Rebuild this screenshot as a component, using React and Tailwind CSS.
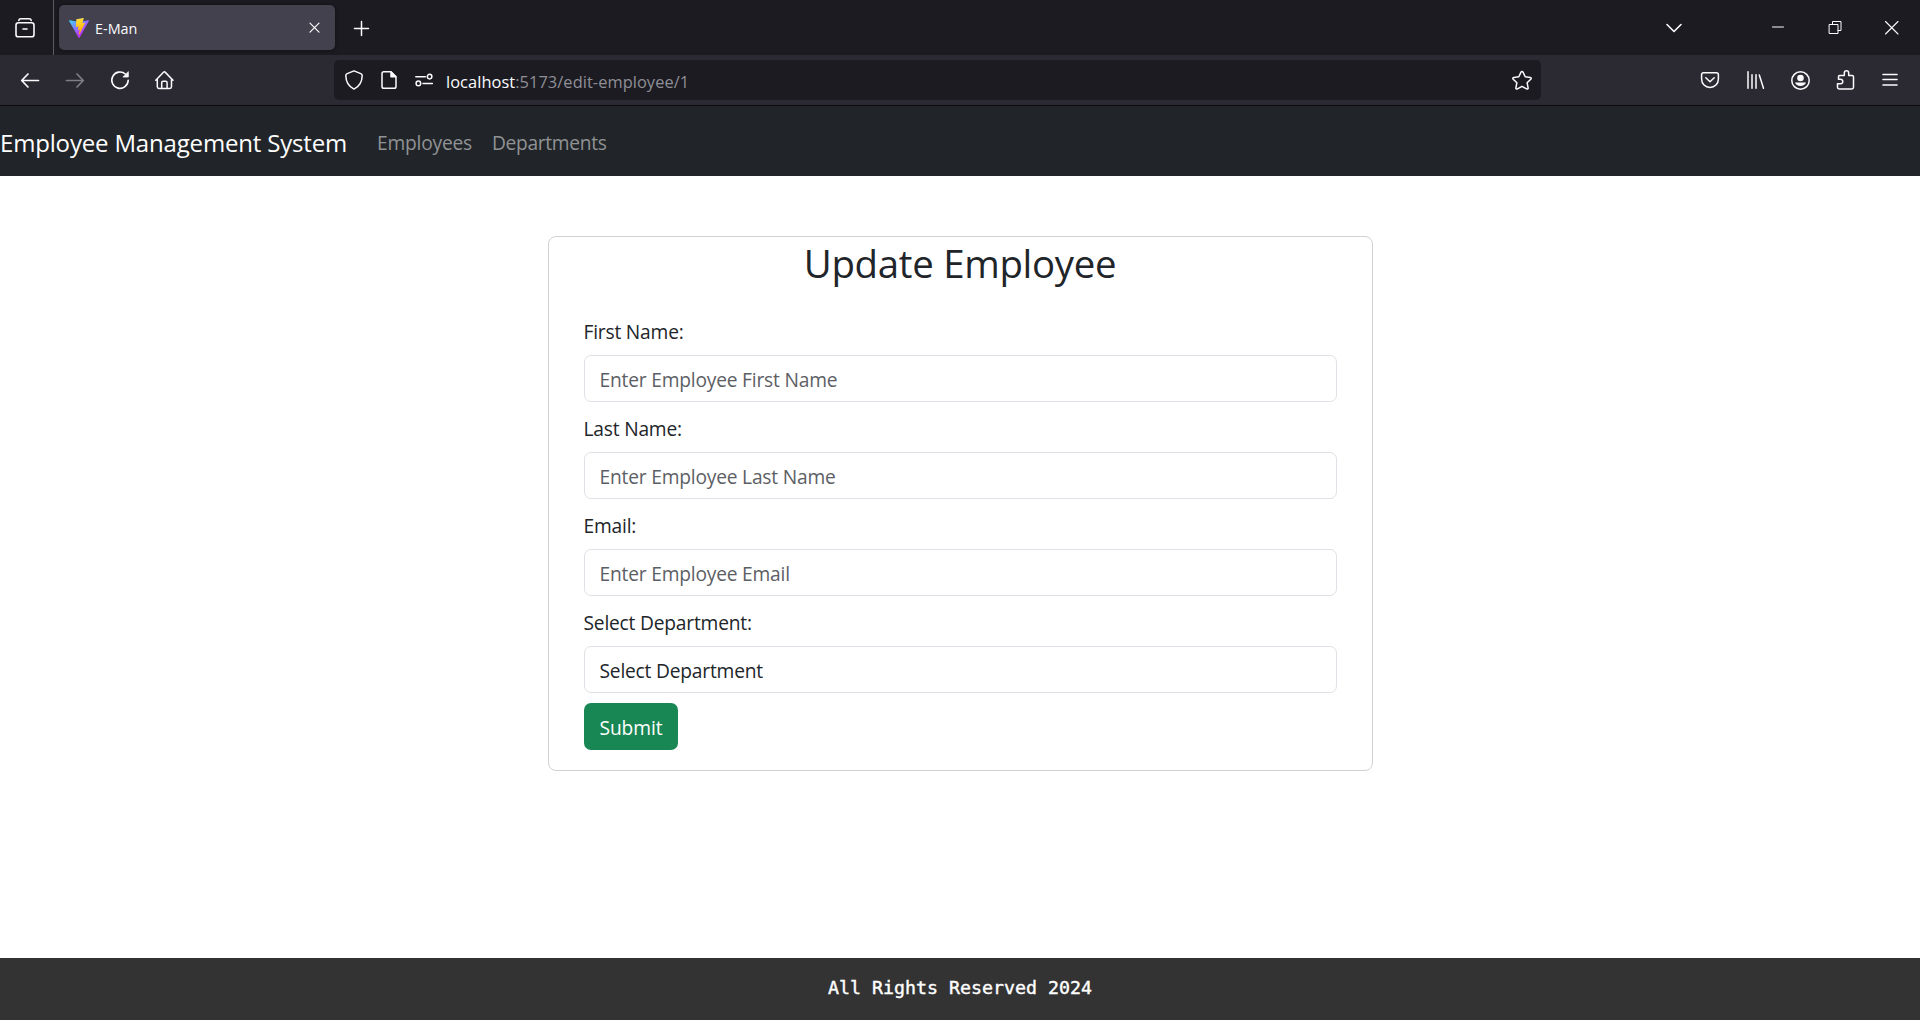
function Icon({ children, className = "", stroke = 1.5 }) {
  return (
    <svg
      viewBox="0 0 20 20"
      className={"h-5 w-5 shrink-0 " + className}
      fill="none"
      stroke="#fbfbfe"
      strokeWidth={stroke}
      strokeLinecap="round"
      strokeLinejoin="round"
      aria-hidden="true"
    >
      {children}
    </svg>
  );
}

function ViteLogo() {
  return (
    <svg viewBox="0 0 256 257" className="mt-px ml-[10px] h-5 w-5 shrink-0" aria-hidden="true">
      <defs>
        <linearGradient id="viteBody" x1="-.828%" x2="57.636%" y1="7.652%" y2="78.411%">
          <stop offset="0%" stopColor="#41D1FF" />
          <stop offset="100%" stopColor="#BD34FE" />
        </linearGradient>
        <linearGradient id="viteBolt" x1="43.376%" x2="50.316%" y1="2.242%" y2="89.03%">
          <stop offset="0%" stopColor="#FFEA83" />
          <stop offset="8.333%" stopColor="#FFDD35" />
          <stop offset="100%" stopColor="#FFA800" />
        </linearGradient>
      </defs>
      <path
        fill="url(#viteBody)"
        d="M255.153 37.938L134.897 252.976c-2.483 4.44-8.862 4.466-11.382.048L.875 37.958c-2.746-4.814 1.371-10.646 6.827-9.67l120.385 21.517a6.537 6.537 0 0 0 2.322-.004l117.867-21.483c5.438-.991 9.574 4.796 6.877 9.62Z"
      />
      <path
        fill="url(#viteBolt)"
        d="M185.432.063L96.44 17.501a3.268 3.268 0 0 0-2.634 3.014l-5.474 92.456a3.268 3.268 0 0 0 3.997 3.378l24.777-5.718c2.318-.535 4.413 1.507 3.936 3.838l-7.361 36.047c-.495 2.426 1.782 4.5 4.151 3.78l15.304-4.649c2.372-.72 4.652 1.36 4.15 3.788l-11.698 56.621c-.732 3.542 3.979 5.473 5.943 2.437l1.313-2.028l72.516-144.72c1.215-2.423-.88-5.186-3.54-4.672l-25.505 4.922c-2.396.462-4.435-1.77-3.759-4.114l16.646-57.705c.677-2.35-1.37-4.583-3.769-4.113Z"
      />
    </svg>
  );
}

function TabStrip() {
  return (
    <div className="flex h-[55px] items-center bg-[#1c1b22]">
      <Icon className="mt-px ml-[15px]" stroke={1.6}>
        <path d="M3.8 2.4C4 1.2 4.7.8 5.800.8h8.400c1.100 0 1.800.4 2 1.600" />
        <rect x="1" y="4.800" width="18" height="14" rx="2.400" />
        <path d="M8 11h4" />
      </Icon>
      <div className="ml-[18px] h-full w-px bg-[#5b5b66]" />
      <div className="ml-[5px] flex h-[45px] w-[276px] items-center rounded-[5px] bg-[#42414d] shadow-[0_0_4px_rgba(0,0,0,0.5)]">
        <ViteLogo />
        <span className="ml-[6px] pt-[2px] text-[14.4px] leading-5 text-[#fbfbfe]">E-Man</span>
        <Icon className="mr-[10px] ml-auto" stroke={1.2}>
          <path d="M5 5.200l9 9M14 5.200l-9 9" />
        </Icon>
      </div>
      <Icon className="mt-[3px] ml-[16px]" stroke={1.5}>
        <path d="M10.500 2.500v14M3.500 9.500h14" />
      </Icon>
      <Icon className="ml-auto" stroke={1.6}>
        <path d="M3 6.500l7 7 7-7" />
      </Icon>
      <Icon className="ml-[84px]" stroke={1}>
        <path d="M4.500 9h11" />
      </Icon>
      <Icon className="mt-px ml-[37px]" stroke={1}>
        <path d="M4.500 6.500h8.500v9h-8.500zM7.500 6.500v-3h8.500v9h-3" strokeLinejoin="miter" />
      </Icon>
      <Icon className="mt-px mr-[18px] ml-[37px]" stroke={1.1}>
        <path d="M3.500 3.500l12.500 12.500M16 3.500L3.500 16" />
      </Icon>
    </div>
  );
}

function AddressBar() {
  return (
    <div className="ml-[159px] flex h-10 w-[1207px] items-center rounded-[5px] bg-[#1c1b22]">
      <Icon className="ml-[10px]">
        <path d="M10 .9l6.800 2.700c.9.4 1.400 1 1.400 2-.1 6.200-2.700 11-8.200 13.500C4.500 16.600 1.900 11.800 1.800 5.600c0-1 .5-1.600 1.400-2z" />
      </Icon>
      <Icon className="ml-[15px]">
        <path d="M4.800 1.800h7.200l5 5v9.600c0 1.100-.7 1.800-1.800 1.800H4.800c-1.100 0-1.800-.7-1.800-1.800V3.600c0-1.100.7-1.800 1.800-1.800z" />
        <path d="M12 2v4.800h4.800z" fill="#fbfbfe" />
      </Icon>
      <Icon className="ml-[15px]">
        <path d="M1.800 6.800h9.500M9 13.400h9.400" />
        <circle cx="15.600" cy="6.600" r="2.300" />
        <circle cx="4.400" cy="13.400" r="2.300" />
      </Icon>
      <div className="ml-3 pt-[3px] text-[16.4px] leading-6 tracking-[0.06px] text-[#8f8f96]">
        <span className="text-[#fbfbfe]">localhost</span>:5173/edit-employee/1
      </div>
      <Icon className="mr-[9px] ml-auto">
        <path d="M10 1.400c.5 0 .8.3 1 .7l2.200 4.700 5 .6c1 .1 1.300 1.200.6 1.800l-3.700 3.500 1 5.100c.2 1-.7 1.600-1.500 1.100L10 16.400l-4.600 2.500c-.8.5-1.700-.1-1.500-1.100l1-5.100L1.200 9.200c-.7-.6-.4-1.700.6-1.800l5-.6L9 2.100c.2-.4.5-.7 1-.7z" />
      </Icon>
    </div>
  );
}

function Toolbar() {
  return (
    <div className="flex h-[50px] items-center bg-[#2b2a33]">
      <Icon className="ml-5" stroke={1.7}>
        <path d="M18.500 10.500H2M8 4L1.700 10.500 8 17" />
      </Icon>
      <Icon className="ml-[25px] opacity-40" stroke={1.7}>
        <path d="M1.500 10.500H18M12 4l6.300 6.500L12 17" />
      </Icon>
      <Icon className="ml-[25px]" stroke={1.6}>
        <path d="M15.400 4A8.200 8.200 0 1 0 18.200 10.300" />
        <path d="M18.300 2v5h-5z" fill="#fbfbfe" strokeWidth="0.8" />
      </Icon>
      <Icon className="ml-[25px]">
        <path d="M.8 10.200L8.700 2.100q.7-.7 1.400 0L18 10.200M2.300 8.800v8c0 1 .6 1.700 1.700 1.700h10.800c1.100 0 1.700-.7 1.700-1.700v-8" />
        <path d="M6.700 18.300v-5.600c0-.9.5-1.400 1.400-1.400h2.600c.9 0 1.400.5 1.400 1.400v5.600" />
      </Icon>
      <AddressBar />
      <Icon className="ml-auto">
        <path d="M3.600 2.800h12.800c1.200 0 2 .8 2 2V9c0 4.900-3.700 8.400-8.400 8.400S1.600 13.900 1.600 9V4.800c0-1.200.8-2 2-2z" />
        <path d="M5.800 7.800L10 11.800l4.200-4" />
      </Icon>
      <Icon className="ml-[26px]">
        <path d="M2 1.800v16.400M6 4.800v13.400M10 4.800v13.400M13.300 5l4.200 13.200" />
      </Icon>
      <Icon className="ml-[25px]">
        <circle cx="9.500" cy="10.500" r="8.700" />
        <circle cx="9.500" cy="8" r="3.300" fill="#fbfbfe" stroke="none" />
        <path d="M4 12.600h11c-.8 2.200-2.900 3.400-5.500 3.400S4.800 14.800 4 12.600z" fill="#fbfbfe" stroke="none" />
      </Icon>
      <Icon className="ml-[25px]">
        <path d="M3.200 19h12.600c1 0 1.700-.7 1.700-1.700V6.700c0-.7-.5-1.200-1.200-1.200h-3.600V3a2.200 2.200 0 0 0-4.400 0v2.500H3.700c-.7 0-1.200.5-1.200 1.200v2.500h2a2.300 2.300 0 0 1 0 4.600h-3v3.500c0 1 .7 1.700 1.700 1.700z" />
      </Icon>
      <Icon className="mr-5 ml-[24px]" stroke={1.6}>
        <path d="M3 4.500h14M3 9.500h14M3 15h14" />
      </Icon>
    </div>
  );
}

function SiteNav() {
  return (
    <nav className="flex h-[70px] items-center bg-[#212529] pt-[3px]">
      <span className="w-[377px] text-[24px] leading-9 tracking-[-0.17px] whitespace-nowrap text-white">
        Employee Management System
      </span>
      <span className="w-[115px] text-[19.2px] leading-[30px] tracking-[-0.2px] text-[#909294]">Employees</span>
      <span className="text-[19.2px] leading-[30px] tracking-[-0.32px] text-[#909294]">Departments</span>
    </nav>
  );
}

function Field({ label, children }) {
  return (
    <div className="mb-3 flex flex-col gap-2">
      <span className="text-[19.2px] leading-[30px] tracking-[-0.2px] text-[#212529]">{label}</span>
      {children}
    </div>
  );
}

const controlBase =
  "h-[47px] w-full appearance-none rounded-[7px] border border-[#dee2e6] bg-white px-[15px] text-[19.2px] tracking-[-0.2px] text-[#212529] outline-none placeholder:text-[#5c6065] placeholder:opacity-100";

function EmployeeForm() {
  return (
    <div className="mx-auto mt-[60px] w-[825px] rounded-[8px] border border-[#d0d1d2] bg-white">
      <h2 className="text-center text-[38.4px] leading-[52px] tracking-[-0.3px] text-[#212529]">Update Employee</h2>
      <form className="px-[35px] pt-7 pb-5">
        <Field label="First Name:">
          <input className={controlBase + " pt-[2px]"} placeholder="Enter Employee First Name" />
        </Field>
        <Field label="Last Name:">
          <input className={controlBase + " pt-[2px]"} placeholder="Enter Employee Last Name" />
        </Field>
        <Field label="Email:">
          <input className={controlBase + " pt-[2px]"} placeholder="Enter Employee Email" />
        </Field>
        <Field label="Select Department:">
          <select className={controlBase + " pt-[4px]"}>
            <option>Select Department</option>
          </select>
        </Field>
        <button
          type="button"
          className="-mt-[2px] block h-[47px] w-[94px] rounded-[7px] bg-[#198754] pt-[4px] pl-px text-[19.2px] tracking-[-0.05px] text-white"
        >
          Submit
        </button>
      </form>
    </div>
  );
}

export default function App() {
  return (
    <div className="flex h-[1020px] w-[1920px] flex-col overflow-hidden bg-white font-['Open_Sans','Noto_Sans',sans-serif]">
      <header>
        <TabStrip />
        <Toolbar />
        <div className="h-px bg-[#0c0c0d]" />
      </header>
      <SiteNav />
      <main className="flex-1">
        <EmployeeForm />
      </main>
      <footer className="flex h-[62px] items-center justify-center bg-[#333333] pb-[3px] font-['DejaVu_Sans_Mono','Liberation_Mono',monospace] text-[18.27px] leading-6 text-white [-webkit-text-stroke:0.4px_white]">
        All Rights Reserved 2024
      </footer>
    </div>
  );
}
